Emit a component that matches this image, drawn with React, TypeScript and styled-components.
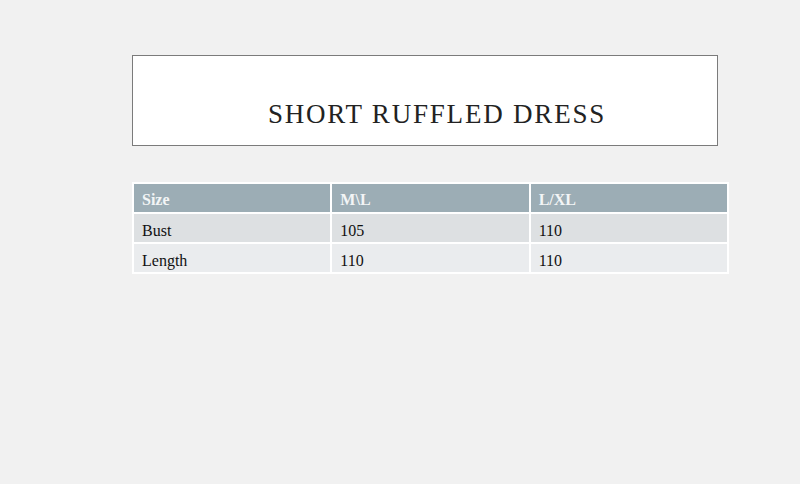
import React from "react";
import styled, { createGlobalStyle } from "styled-components";

const Global = createGlobalStyle`
  html, body { margin: 0; padding: 0; background: #f1f1f1; }
  body { font-family: "Liberation Serif", "Times New Roman", serif; }
`;

const Page = styled.div`
  width: 800px;
  height: 484px;
  box-sizing: border-box;
  padding: 55px 0 0 132px;
  background: #f1f1f1;
`;

const TitleBox = styled.div`
  width: 586px;
  height: 91px;
  box-sizing: border-box;
  border: 1px solid #7b7b7b;
  background: #ffffff;
  display: flex;
  justify-content: center;
  align-items: flex-start;
  padding: 45px 0 0 24px;
`;

const Title = styled.h1`
  margin: 0;
  font-family: "Liberation Serif", "Times New Roman", serif;
  font-weight: normal;
  font-size: 27px;
  line-height: 27px;
  letter-spacing: 1.8px;
  color: #222222;
  white-space: nowrap;
`;

const Table = styled.table`
  margin-top: 36px;
  width: 597px;
  border-collapse: separate;
  border-spacing: 2px;
  background: #ffffff;
  table-layout: fixed;
`;

const Cell = styled.td<{ $variant: "head" | "odd" | "even" }>`
  height: 28px;
  box-sizing: border-box;
  padding: ${(p) => (p.$variant === "head" ? "7px 8px 3px" : "8px 8px 2px")};
  vertical-align: top;
  font-family: "Liberation Serif", "Times New Roman", serif;
  font-size: 16px;
  line-height: 18px;
  text-align: left;
  font-weight: ${(p) => (p.$variant === "head" ? "bold" : "normal")};
  color: ${(p) => (p.$variant === "head" ? "#f3f5f6" : "#111111")};
  background: ${(p) =>
    p.$variant === "head" ? "#9cadb5" : p.$variant === "odd" ? "#dde0e2" : "#eaecee"};
`;

const rows = [
  ["Size", "M\\L", "L/XL"],
  ["Bust", "105", "110"],
  ["Length", "110", "110"],
];

export default function App() {
  return (
    <Page>
      <Global />
      <TitleBox>
        <Title>SHORT RUFFLED DRESS</Title>
      </TitleBox>
      <Table>
        <tbody>
          {rows.map((r, i) => (
            <tr key={i}>
              {r.map((c, j) => (
                <Cell key={j} $variant={i === 0 ? "head" : i === 1 ? "odd" : "even"}>
                  {c}
                </Cell>
              ))}
            </tr>
          ))}
        </tbody>
      </Table>
    </Page>
  );
}
